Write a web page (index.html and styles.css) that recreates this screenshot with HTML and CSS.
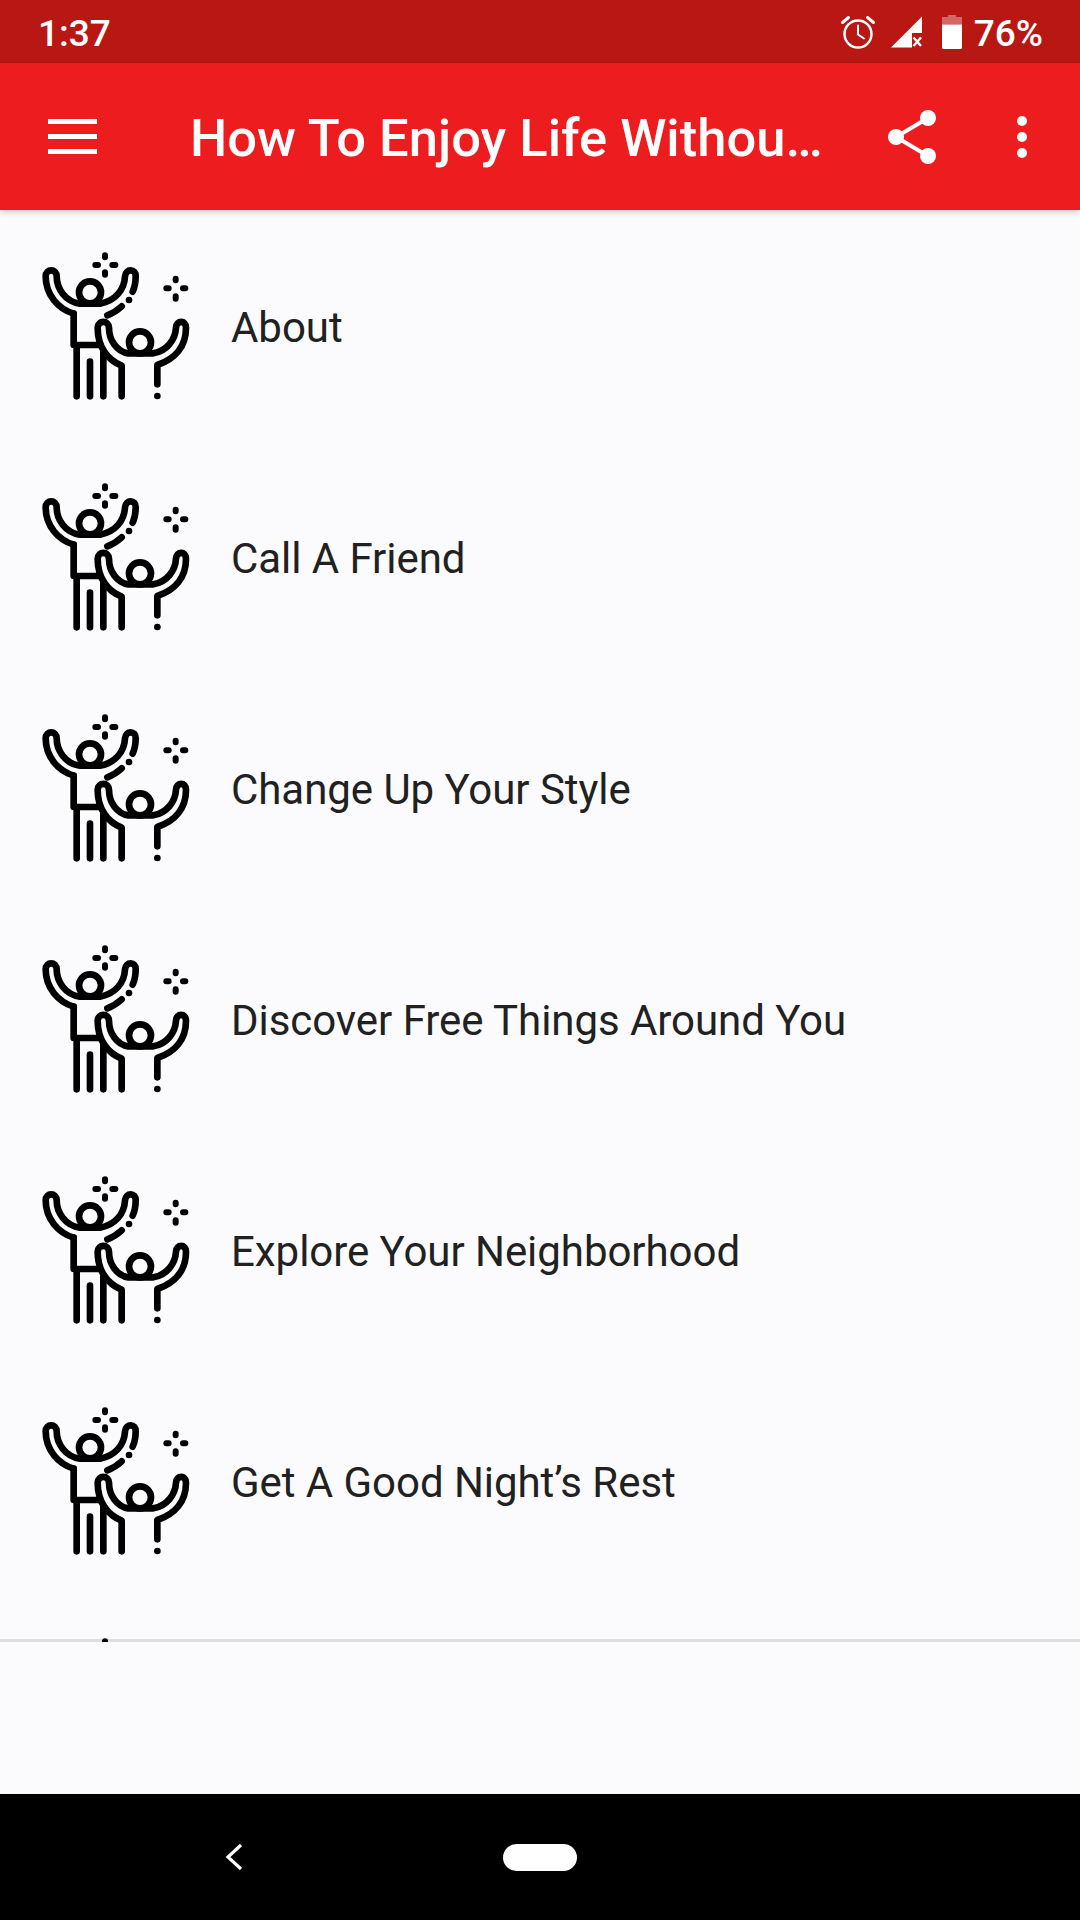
FILE: index.html
```html
<!DOCTYPE html>
<html lang="en">
<head>
<meta charset="utf-8">
<title>How To Enjoy Life Without Spending Money</title>
<link rel="stylesheet" href="styles.css">
</head>
<body>
<svg class="defs" width="0" height="0" aria-hidden="true">
  <symbol id="people" viewBox="0 0 570 540">
    <g fill="none" stroke="#000" stroke-width="20" stroke-linecap="round" stroke-linejoin="round">
      <!-- adult -->
      <path d="M161 236C115 222 77 180 77 124C77 100 110 100 110 124C110 160 135 200 180 206H240C285 198 313 165 315 124C317 100 348 100 347 124C347 140 345 155 338 170"/>
      <circle cx="210" cy="172" r="33"/>
      <path d="M161 236V330H235"/>
      <path d="M170 332V484M210 380V484M250 350V484"/>
      <path d="M305 214C292 226 278 235 262 241"/>
      <path d="M327 195h.1"/>
      <!-- child -->
      <path d="M305 484V392C262 375 233 335 233 278C233 255 267 255 267 278C267 315 290 350 325 355H400C440 348 466 315 468 278C469 255 498 255 498 278C498 335 465 372 412 390V448"/>
      <circle cx="360" cy="322" r="33"/>
      <path d="M412 483h.1"/>
      <!-- sparkles -->
      <path d="M255 61V67M255 112V119M226 90H234M277 90H286" stroke-width="18"/>
      <path d="M467 131V136M467 184V191M439 160H446M489 160H496" stroke-width="18"/>
    </g>
  </symbol>
</svg>

<div class="screen">
  <header class="status">
    <span class="time">1:37</span>
    <div class="status-right">
      <svg class="ic-alarm" viewBox="0 0 36 36"><g fill="none" stroke="#fff" stroke-width="2.4" stroke-linecap="round"><circle cx="18" cy="20" r="13.5"/><path d="M18 11.5V20.5L24 24.5" stroke-width="2"/><path d="M2.5 8.5L8.5 3.5M33.5 8.5L27.5 3.5" stroke-width="3"/></g></svg>
      <svg class="ic-signal" viewBox="0 0 32 32"><path d="M0 31.5L31 .5V17H21V31.500Z" fill="#fff"/><path d="M22.500 21.500L30 30M30 21.500L22.500 30" stroke="#fff" stroke-width="2.400" fill="none"/></svg>
      <svg class="ic-battery" viewBox="0 0 20 34"><path d="M6 0H14V2H20V9.500H0V2H6Z" fill="#fff" fill-opacity=".35"/><path d="M0 9.500H20V32.500Q20 34 18.500 34H1.500Q0 34 0 32.500Z" fill="#fff"/></svg>
      <span class="pct">76%</span>
    </div>
  </header>

  <nav class="appbar">
    <svg class="ic-menu" viewBox="0 0 49 35"><path d="M0 0H49V5H0ZM0 15H49V20H0ZM0 30H49V35H0Z" fill="#fff"/></svg>
    <h1 class="title">How To Enjoy Life Without Spending Money</h1>
    <svg class="ic-share" viewBox="0 0 48 54"><g fill="#fff"><circle cx="40" cy="8" r="8"/><circle cx="8" cy="27" r="8"/><circle cx="40" cy="46" r="8"/></g><path d="M40 8L8 27L40 46" fill="none" stroke="#fff" stroke-width="4"/></svg>
    <svg class="ic-more" viewBox="0 0 10 42"><g fill="#fff"><circle cx="5" cy="5" r="5"/><circle cx="5" cy="21" r="5"/><circle cx="5" cy="37" r="5"/></g></svg>
  </nav>

  <main class="list">
    <div class="row"><svg class="people"><use href="#people"/></svg><span class="label">About</span></div>
    <div class="row"><svg class="people"><use href="#people"/></svg><span class="label">Call A Friend</span></div>
    <div class="row"><svg class="people"><use href="#people"/></svg><span class="label">Change Up Your Style</span></div>
    <div class="row"><svg class="people"><use href="#people"/></svg><span class="label">Discover Free Things Around You</span></div>
    <div class="row"><svg class="people"><use href="#people"/></svg><span class="label">Explore Your Neighborhood</span></div>
    <div class="row"><svg class="people"><use href="#people"/></svg><span class="label">Get A Good Night’s Rest</span></div>
    <div class="row"><svg class="people"><use href="#people"/></svg></div>
  </main>

  <div class="ad"></div>

  <footer class="navbar">
    <svg class="ic-back" viewBox="0 0 18 28"><path d="M16 2L3 14L16 26" fill="none" stroke="#fff" stroke-width="3.200"/></svg>
    <span class="home"></span>
  </footer>
</div>
</body>
</html>
```
FILE: styles.css
```css
* { box-sizing: border-box; }
html, body { margin: 0; padding: 0; }
body { font-family: Roboto, "Liberation Sans", sans-serif; background: #fbfbfd; }
.defs { position: absolute; }
.screen { width: 1080px; height: 1920px; display: flex; flex-direction: column; overflow: hidden; }

.status {
  height: 63px; flex: none; background: #b91713; color: #fff;
  display: flex; align-items: center; justify-content: space-between;
  padding: 0 37px 0 38px;
}
.time { font-size: 37px; line-height: 63px; font-weight: 500; padding-top: 3px; }
.status-right { display: flex; align-items: center; }
.ic-alarm { width: 36px; height: 36px; margin-right: 15px; }
.ic-signal { width: 32px; height: 32px; margin-right: 19px; }
.ic-battery { width: 20px; height: 34px; margin-right: 12px; }
.pct { font-size: 37px; line-height: 63px; font-weight: 500; padding-top: 3px; }

.appbar {
  height: 147px; flex: none; background: #ed1c1f;
  display: flex; align-items: center;
  padding: 0 0 0 48px; position: relative; z-index: 2;
  box-shadow: 0 2px 7px rgba(0,0,0,.2);
}
.ic-menu { width: 49px; height: 35px; flex: none; margin-right: 93px; }
.title {
  margin: 0; width: 640px; flex: none; font-size: 52.5px; font-weight: 500; color: #fff;
  white-space: nowrap; overflow: hidden; text-overflow: ellipsis; line-height: 74px; padding-top: 2px;
}
.ic-share { width: 48px; height: 54px; flex: none; margin-left: 58px; }
.ic-more { width: 10px; height: 42px; flex: none; margin-left: 81px; }

.list { height: 1432px; flex: none; overflow: hidden; position: relative; z-index: 1; }
.row { height: 231px; display: flex; align-items: center; padding-left: 20px; }
.people { width: 190px; height: 180px; flex: none; margin-top: -2px; }
.label { margin-left: 21px; font-size: 42px; letter-spacing: -.05px; color: #212121; position: relative; top: 2px; }

.ad { flex: 1; margin-top: -3px; border-top: 3px solid #dedede; background: #fbfbfd; }

.navbar {
  height: 126px; flex: none; background: #000;
  display: flex; align-items: center; padding-left: 225px;
}
.ic-back { width: 18px; height: 28px; flex: none; margin-right: 260px; }
.home { width: 74px; height: 27px; border-radius: 14px; background: #fff; display: block; }
```
